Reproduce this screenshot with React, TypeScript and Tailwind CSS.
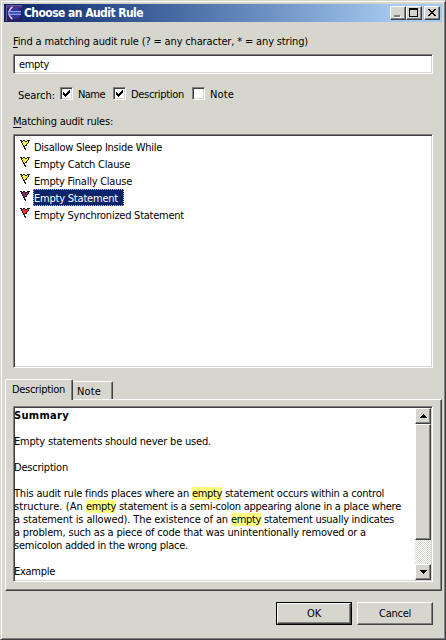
import { useLayoutEffect, useRef, useState, type ReactNode } from "react";

const sunken =
  "border border-t-[#808080] border-l-[#808080] border-r-white border-b-white shadow-[inset_1px_1px_0_#404040,inset_-1px_-1px_0_#d6d6ce]";
const raised =
  "border border-t-white border-l-white border-r-[#404040] border-b-[#404040] shadow-[inset_-1px_-1px_0_#808080] bg-[#d6d6ce]";

/* Spreads its letters so that the text takes exactly `w` pixels. */
function Fit({ w, className = "", children }: { w: number; className?: string; children: ReactNode }) {
  const inner = useRef<HTMLSpanElement>(null);
  const [spacing, setSpacing] = useState(0);
  useLayoutEffect(() => {
    const el = inner.current;
    if (!el) return;
    const count = (el.textContent ?? "").length;
    setSpacing((w - el.getBoundingClientRect().width) / count);
  }, [w]);
  return (
    <span className={`inline-block whitespace-pre align-top ${className}`} style={{ width: w }}>
      <span ref={inner} style={{ letterSpacing: spacing }}>
        {children}
      </span>
    </span>
  );
}

const FLAG = [
  "kk.kk..kkk",
  ".kkffkkfk.",
  ".kffffffk.",
  "..kffffk..",
  "..kfffk...",
  "...kfkk...",
  "...kk.....",
  "....k.....",
  "....kk....",
  ".....k....",
];

function Flag({ fill, pole = "#202018" }: { fill: string; pole?: string }) {
  return (
    <svg width="10" height="10" viewBox="0 0 10 10" shapeRendering="crispEdges" className="mt-[2px] shrink-0">
      {FLAG.flatMap((row, y) =>
        [...row].map((c, x) =>
          c === "." ? null : <rect key={`${x}-${y}`} x={x} y={y} width="1" height="1" fill={c === "k" ? pole : fill} />,
        ),
      )}
    </svg>
  );
}

function EclipseIcon() {
  return (
    <svg width="16" height="16" viewBox="0 0 16 16" className="shrink-0">
      <rect width="16" height="16" fill="#2c1c58" />
      <path d="M0 0h16v3H0z" fill="#54347c" />
      <path d="M.5 16V.5H16" fill="none" stroke="#7058a0" strokeWidth="1" />
      <circle cx="9" cy="8" r="6" fill="#34349a" />
      <path d="M6.5 2A7 7 0 0 0 6.5 14" fill="none" stroke="#d4c8f0" strokeWidth="1.5" />
      <path d="M2 6.5h13M2 9.5h13" stroke="#8ca4f0" strokeWidth="1" />
      <path d="M3 8h12" stroke="#4458c8" strokeWidth="1.6" />
    </svg>
  );
}

function Check({ checked, label, w }: { checked?: boolean; label: string; w: number }) {
  return (
    <label className="flex h-[14px] items-start">
      <span className={`h-[13px] w-[13px] bg-white ${sunken}`}>
        {checked && (
          <svg width="11" height="11" viewBox="0 0 11 11" shapeRendering="crispEdges" className="block">
            <path d="M2 4h1v1h1v1h1v-1h1v-1h1v-1h1v-1h1v3h-1v1h-1v1h-1v1h-1v1h-1v-1h-1v-1h-1z" fill="#000" />
          </svg>
        )}
      </span>
      <Fit w={w} className="mt-px ml-[5px]">
        {label}
      </Fit>
    </label>
  );
}

const rules = [
  { name: "Disallow Sleep Inside While", w: 128, fill: "#f8f040" },
  { name: "Empty Catch Clause", w: 96, fill: "#f8f040" },
  { name: "Empty Finally Clause", w: 98, fill: "#f8f040" },
  { name: "Empty Statement", w: 84, fill: "#803058", selected: true },
  { name: "Empty Synchronized Statement", w: 150, fill: "#f03030" },
];

function Mark() {
  return (
    <Fit w={30} className="bg-[#ffff80]">
      empty
    </Fit>
  );
}

export default function App() {
  return (
    <div className="h-[640px] w-[446px] overflow-hidden border border-t-[#d6d6ce] border-l-[#d6d6ce] border-r-[#404040] border-b-[#404040] bg-[#d6d6ce] font-['DejaVu_Sans_Condensed','DejaVu_Sans',sans-serif] text-[11px] leading-[13px] text-black shadow-[inset_1px_1px_0_#fff,inset_-1px_-1px_0_#808080]">
      <div className="flex h-full flex-col px-[3px] pt-[3px]">
        <header className="flex h-[18px] shrink-0 items-center bg-gradient-to-r from-[#0a246a] to-[#a6caf0] to-90% pr-[2px] pl-[2px]">
          <EclipseIcon />
          <Fit w={119} className="ml-[2px] text-[12px] leading-[16px] font-bold text-white">
            Choose an Audit Rule
          </Fit>
          <div className="ml-auto flex">
            <button className={`flex h-[14px] w-4 items-start ${raised}`}>
              <span className="mt-[8px] ml-[3px] h-[2px] w-[6px] bg-[#808080] shadow-[1px_1px_0_#fff]" />
            </button>
            <button className={`flex h-[14px] w-4 items-start ${raised}`}>
              <span className="mt-[1px] ml-[2px] h-[9px] w-[9px] border border-t-2 border-black" />
            </button>
            <button className={`ml-[2px] flex h-[14px] w-4 items-start ${raised}`}>
              <svg width="8" height="7" viewBox="0 0 8 7" shapeRendering="crispEdges" className="mt-[2px] ml-[3px]">
                <path
                  d="M0 0h2v1h1v1h2v-1h1v-1h2v1h-1v1h-1v1h-1v1h1v1h1v1h1v1h-2v-1h-1v-1h-2v1h-1v1h-2v-1h1v-1h1v-1h1v-1h-1v-1h-1v-1h-1z"
                  fill="#000"
                />
              </svg>
            </button>
          </div>
        </header>

        <main className="flex flex-col px-[9px]">
          <Fit w={295} className="mt-[13px] h-[13px]">
            <u className="underline-offset-2">F</u>ind a matching audit rule (? = any character, * = any string)
          </Fit>
          <div className={`mt-[6px] h-5 w-[420px] bg-white pt-[3px] pl-[5px] ${sunken}`}>
            <Fit w={30}>empty</Fit>
          </div>
          <div className="mt-[13px] flex h-[14px]">
            <Fit w={37} className="mt-[2px] ml-[5px]">
              Search:
            </Fit>
            <div className="ml-[5px] flex gap-[8px]">
              <Check checked label="Name" w={27} />
              <Check checked label="Description" w={53} />
              <Check label="Note" w={24} />
            </div>
          </div>
          <Fit w={100} className="mt-[14px] h-[13px]">
            <u className="underline-offset-2">M</u>atching audit rules:
          </Fit>
          <ul className={`mt-[6px] h-[234px] w-[420px] bg-white pt-[3px] pl-[6px] ${sunken}`}>
            {rules.map((r) => (
              <li key={r.name} className="flex h-[17px] items-start">
                <Flag fill={r.fill} pole={r.selected ? "#181030" : undefined} />
                <span
                  className={
                    r.selected
                      ? "ml-[3px] h-[17px] w-[91px] border border-dotted border-[#d8c890] bg-[#0a246a] pt-[2px] text-white"
                      : "ml-[3px] h-[17px] pt-[3px] pl-px"
                  }
                >
                  <Fit w={r.w}>{r.name}</Fit>
                </span>
              </li>
            ))}
          </ul>
        </main>

        <section className="mt-[11px] ml-px flex w-[437px] flex-col">
          <div className="z-10 flex h-[20px] items-end">
            <div className="z-10 -mb-px h-[21px] w-[68px] rounded-t-[2px] border border-b-0 border-t-white border-l-white border-r-[#404040] bg-[#d6d6ce] pt-[3px] pl-[6px] shadow-[inset_-1px_0_0_#808080]">
              <Fit w={53}>Description</Fit>
            </div>
            <div className="h-[18px] w-[40px] rounded-tr-[2px] border border-b-0 border-l-0 border-t-white border-r-[#404040] pt-[3px] pl-[4px] shadow-[inset_-1px_0_0_#808080]">
              <Fit w={24}>Note</Fit>
            </div>
          </div>
          <div className={`h-[192px] pt-[6px] pl-[7px] ${raised}`}>
            <div className={`flex h-[176px] w-[420px] justify-between bg-white py-px pr-px ${sunken}`}>
              <article className="flex flex-col items-start pt-px">
                <Fit w={55} className="h-[26px] font-bold">
                  Summary
                </Fit>
                <Fit w={197} className="h-[26px]">
                  Empty statements should never be used.
                </Fit>
                <Fit w={54} className="h-[26px]">
                  Description
                </Fit>
                <p className="flex">
                  <Fit w={178}>{"This audit rule finds places where an "}</Fit>
                  <Mark />
                  <Fit w={162}>{" statement occurs within a control"}</Fit>
                </p>
                <p className="flex">
                  <Fit w={72}>{"structure. (An "}</Fit>
                  <Mark />
                  <Fit w={285}>{" statement is a semi-colon appearing alone in a place where"}</Fit>
                </p>
                <p className="flex">
                  <Fit w={217}>{"a statement is allowed). The existence of an "}</Fit>
                  <Mark />
                  <Fit w={133}>{" statement usually indicates"}</Fit>
                </p>
                <Fit w={352}>a problem, such as a piece of code that was unintentionally removed or a</Fit>
                <Fit w={174} className="h-[26px]">
                  semicolon added in the wrong place.
                </Fit>
                <Fit w={41}>Example</Fit>
              </article>
              <div className="flex h-[172px] w-4 flex-col bg-white bg-[repeating-conic-gradient(#d6d6ce_0_25%,#fff_0_50%)] bg-[length:2px_2px]">
                <div className={`flex h-4 items-center justify-center ${raised}`}>
                  <svg width="7" height="4" viewBox="0 0 7 4" shapeRendering="crispEdges">
                    <path d="M3 0h1v1h1v1h1v1h1v1h-7v-1h1v-1h1v-1h1z" />
                  </svg>
                </div>
                <div className={`h-[116px] ${raised}`} />
                <div className={`mt-auto flex h-4 items-center justify-center ${raised}`}>
                  <svg width="7" height="4" viewBox="0 0 7 4" shapeRendering="crispEdges">
                    <path d="M0 0h7v1h-1v1h-1v1h-1v1h-1v-1h-1v-1h-1v-1h-1z" />
                  </svg>
                </div>
              </div>
            </div>
          </div>
        </section>

        <footer className="mt-[11px] flex justify-end gap-[5px] pr-[9px]">
          <div className="h-[23px] w-[76px] border border-black">
            <button className={`block h-[21px] w-[74px] pb-px leading-[13px] ${raised}`}>
              <Fit w={14}>OK</Fit>
            </button>
          </div>
          <button className={`h-[23px] w-[76px] pb-px leading-[13px] ${raised}`}>
            <Fit w={32}>Cancel</Fit>
          </button>
        </footer>
      </div>
    </div>
  );
}
